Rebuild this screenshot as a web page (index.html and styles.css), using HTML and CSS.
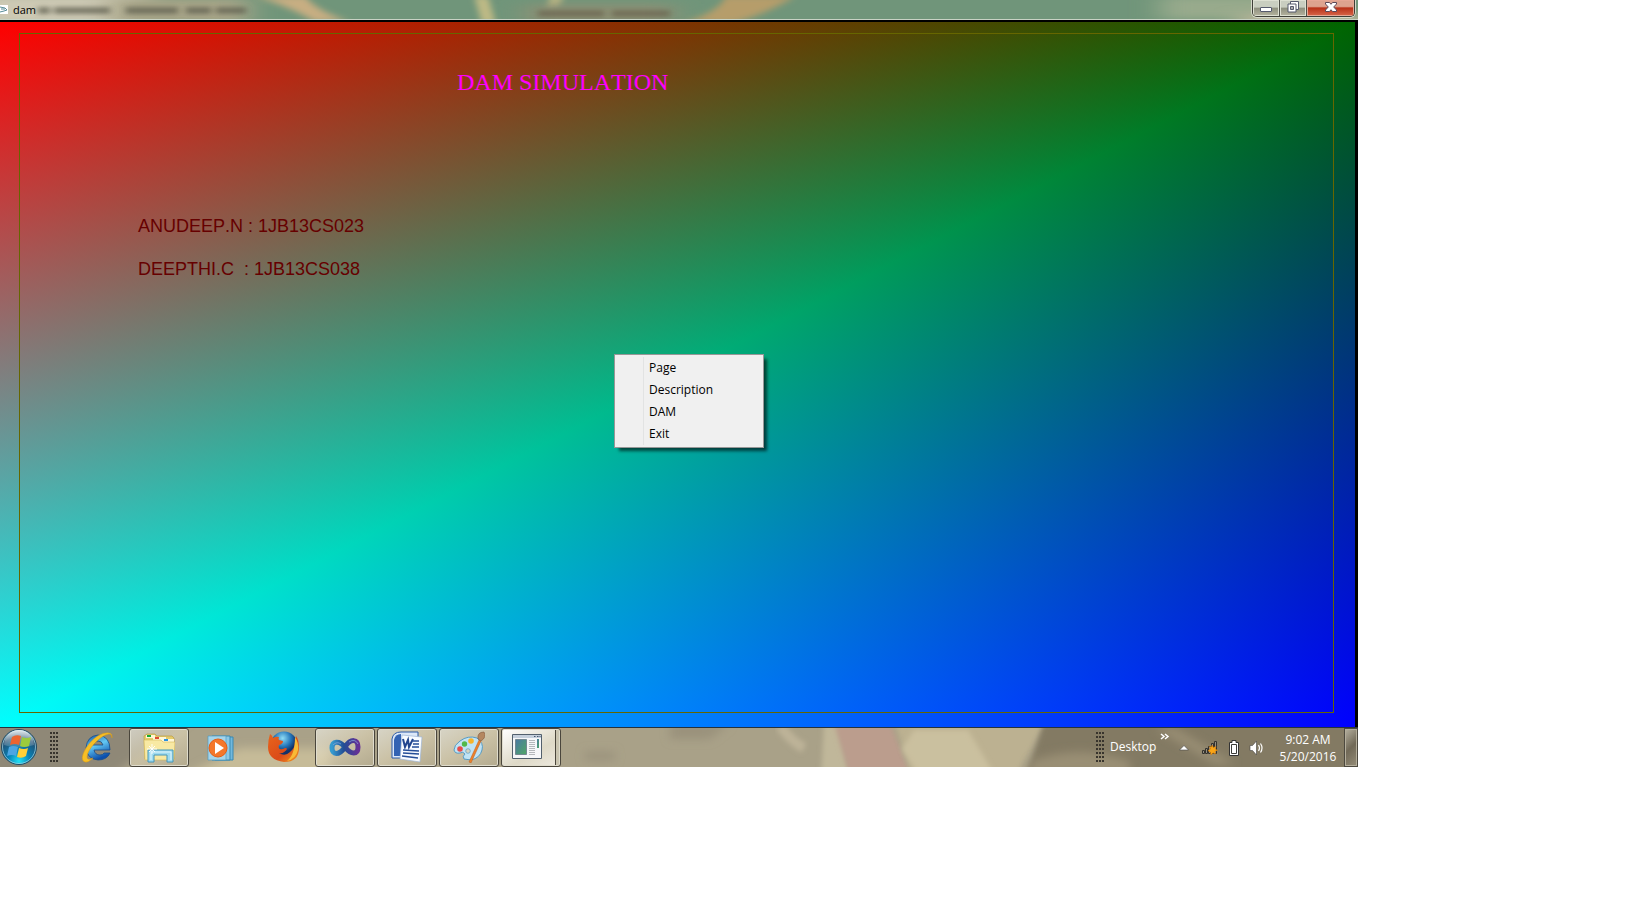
FILE: index.html
```html
<!DOCTYPE html>
<html lang="en">
<head>
<meta charset="utf-8">
<title>dam</title>
<link rel="stylesheet" href="styles.css">
</head>
<body>
<div class="desktop">
  <header class="titlebar">
    <svg class="backdrop" viewBox="0 0 1358 20" preserveAspectRatio="none" aria-hidden="true">
      <defs>
        <filter id="soft" x="-20%" y="-100%" width="140%" height="300%"><feGaussianBlur stdDeviation="3"/></filter>
        <filter id="softer" x="-20%" y="-100%" width="140%" height="300%"><feGaussianBlur stdDeviation="14 4"/></filter>
        <filter id="smear" x="-20%" y="-100%" width="140%" height="300%"><feGaussianBlur stdDeviation="3 2"/></filter>
      </defs>
      <rect width="1358" height="20" fill="#70957a"/>
      <rect x="-30" y="-6" width="180" height="32" fill="#cdc9b4" filter="url(#softer)"/>
      <rect x="110" y="-2" width="140" height="26" fill="#a8a588" filter="url(#softer)"/>
      <path d="M255-4h50q10 14 45 26h-35q-22-14-60-26z" fill="#c8ae82" filter="url(#soft)"/>
      <path d="M474-4h14l8 28h-14zM550-4h14l-6 14-12 2z" fill="#bdb985" filter="url(#soft)"/>
      <rect x="525" y="4" width="150" height="20" fill="#8b9075" filter="url(#softer)"/>
      <path d="M680 24q40-12 46-28h70q-30 18-64 28z" fill="#b69d6a" filter="url(#soft)"/>
      <rect x="1160" y="-4" width="170" height="24" fill="#98aa8c" filter="url(#softer)"/>
      <rect x="1240" y="14" width="130" height="12" fill="#bdb79b" filter="url(#softer)"/>
      <path d="M38 7h12v7H38zM54 7h56v7H54zM126 7h52v7h-52zM186 7h25v7h-25zM216 7h30v7h-30z" fill="#5f5e50" opacity=".7" filter="url(#smear)"/>
      <path d="M538 10h66v7h-66zM612 10h58v7h-58z" fill="#665d48" opacity=".6" filter="url(#smear)"/>
    </svg>
    <svg class="app-icon" viewBox="0 0 8 9" aria-hidden="true"><path fill="#fff" d="M0 0h8v9H0z"/><path d="M0 2l5 1 2 2-3 1-4 1M1 4h4" stroke="#5a8d98" fill="none"/></svg>
    <h1 class="window-title">dam</h1>
    <div class="window-buttons">
      <button class="win-btn minimize" aria-label="Minimize"><svg viewBox="0 0 14 12"><rect x="1.5" y="6.5" width="11" height="4" rx=".5" fill="#fff" stroke="#555a6d"/></svg></button>
      <button class="win-btn restore" aria-label="Restore"><svg viewBox="0 0 14 12"><path d="M4.500.500h8v8h-8z" fill="#fff" stroke="#555a6d"/><path d="M2 3h8v8H2z" fill="#fff" stroke="#555a6d"/><path d="M4.500 5.500h3v3h-3z" fill="#aaa" stroke="#555a6d"/></svg></button>
      <button class="win-btn close" aria-label="Close"><svg viewBox="0 0 14 12"><path d="M1.500 1.500h4L7 3.300l1.500-1.800h4v1.500L9.700 6l2.800 3v1.500h-4L7 8.700l-1.500 1.800h-4V9l2.800-3-2.800-3z" fill="#fff" stroke="#5b4858"/></svg></button>
    </div>
  </header>

  <main class="canvas">
    <svg class="shade" viewBox="0 0 1 1" preserveAspectRatio="none" aria-hidden="true">
      <defs>
        <linearGradient id="red" x1="0" y1="0" x2=".5" y2=".5"><stop stop-color="#f00"/><stop offset="1" stop-color="#000"/></linearGradient>
        <linearGradient id="greenUpper" x1="0" y1="0" x2=".34" y2=".867"><stop stop-color="#000"/><stop offset="1" stop-color="#0f0"/></linearGradient>
        <linearGradient id="greenLower" x1="1" y1="1" x2=".133" y2=".66"><stop stop-color="#000"/><stop offset="1" stop-color="#0f0"/></linearGradient>
        <linearGradient id="blue" x1="0" y1="0" x2="0" y2="1"><stop stop-color="#000"/><stop offset="1" stop-color="#00f"/></linearGradient>
      </defs>
      <rect width="1" height="1" fill="url(#greenUpper)"/>
      <rect class="darken" width="1" height="1" fill="url(#greenLower)"/>
      <rect class="screen" width="1" height="1" fill="url(#red)"/>
      <rect class="screen" width="1" height="1" fill="url(#blue)"/>
    </svg>
    <section class="frame">
      <h2 class="heading">DAM SIMULATION</h2>
      <div class="authors">
        <p>ANUDEEP.N : 1JB13CS023</p>
        <p>DEEPTHI.C&nbsp; : 1JB13CS038</p>
      </div>
    </section>
    <div class="menu" role="menu">
      <button role="menuitem">Page</button>
      <button role="menuitem">Description</button>
      <button role="menuitem">DAM</button>
      <button role="menuitem">Exit</button>
    </div>
  </main>

  <footer class="taskbar">
    <svg class="backdrop" viewBox="0 0 1358 39" preserveAspectRatio="none" aria-hidden="true">
      <defs><filter id="haze" x="-20%" y="-50%" width="140%" height="200%"><feGaussianBlur stdDeviation="5"/></filter>
      <filter id="edge" x="-20%" y="-50%" width="140%" height="200%"><feGaussianBlur stdDeviation="2.500"/></filter></defs>
      <rect width="1358" height="39" fill="#a9a188"/>
      <path d="M-10-10h200l-80 60H-10z" fill="#8f8877" filter="url(#haze)"/>
      <path d="M240 20h90v30h-150z" fill="#c6bb98" filter="url(#haze)"/>
      <path d="M670-5h60l-20 16h-40zM585 24h30v8h-30z" fill="#9a927b" filter="url(#haze)"/>
      <path d="M780-2q12 16 24 22" stroke="#bdb398" stroke-width="10" fill="none" filter="url(#edge)"/>
      <path d="M824-5h15l12 54h-30z" fill="#c0b79a" filter="url(#edge)"/>
      <path d="M834-5h56l22 54h-62z" fill="#bb9d8d" filter="url(#edge)"/>
      <path d="M895-5h150l-30 54H912z" fill="#bcb191" filter="url(#edge)"/>
      <path d="M914 2h54l28 47h-76l-18-28z" fill="#cac09f" filter="url(#edge)"/>
      <path d="M1045-8h330v58h-350z" fill="#837a64" filter="url(#edge)"/>
      <path d="M1030 34q50-20 100 0v12h-100zM1175 0l60 36h-20l-60-36z" fill="#9a8f75" filter="url(#haze)"/>
    </svg>
    <button class="start" aria-label="Start">
      <svg viewBox="0 0 38 38">
        <defs><radialGradient id="orb" cx=".5" cy=".9" r=".9"><stop stop-color="#20e1f5"/><stop offset=".35" stop-color="#0781b5"/><stop offset=".75" stop-color="#234e70"/><stop offset="1" stop-color="#9ab2bd"/></radialGradient>
        <linearGradient id="gloss" x2="0" y2="1"><stop stop-color="#fff" stop-opacity=".7"/><stop offset="1" stop-color="#fff" stop-opacity=".12"/></linearGradient></defs>
        <circle cx="19" cy="19" r="17.500" fill="url(#orb)" stroke="#214b64"/><circle cx="19" cy="19" r="16.500" fill="none" stroke="#a4d5e5" opacity=".7"/>
        <path d="M4 17a15 15 0 0 1 30 0q-15 5-30 0z" fill="url(#gloss)"/>
        <path d="M12 9q4-3 9-1l-2 9q-4-2-9 0z" fill="#ec6430"/><path d="M22 9q4 2 9 0l-2 9q-5 2-9 0z" fill="#9bcb3c"/><path d="M9 19q4-2 9 0l-2 9q-4-2-9 0z" fill="#4ca5e3"/><path d="M19 20q5 2 9 0l-2 8q-4 3-9 1z" fill="#ffcf36"/>
      </svg>
    </button>
    <span class="grip"></span>
    <nav class="apps" aria-label="Taskbar">
      <button class="app" aria-label="Internet Explorer"><svg viewBox="0 0 32 32">
        <defs><linearGradient id="ie" x2=".4" y2="1"><stop stop-color="#1452a0"/><stop offset=".5" stop-color="#63c8f4"/><stop offset="1" stop-color="#0c4fac"/></linearGradient></defs>
        <path d="M29 19H13q1 5 6 5 3 0 4-2h6q-3 7-12 7-11-1-12-12Q6 5 17 4q12 1 12 15zm-7-5q-1-4-5-4-4 0-5 4z" fill="url(#ie)" stroke="#174d8c" stroke-width=".8"/>
        <path d="M31 7q1-7-9-4.500Q12 6 5 17-2 29 4 31q3 1 8-4-6 3-6-1 0-5 7-13Q21 4 28 3q3 0 3 4z" fill="#f7bf26" stroke="#d89810" stroke-width=".5"/></svg></button>
      <button class="app open" aria-label="Windows Explorer"><svg viewBox="0 0 32 32">
        <path d="M1 5l3-2h8l2 2h15l2 2v21H2z" fill="#e5cb6b" stroke="#b99b46" stroke-width=".7"/><path d="M3 4h9v3H3z" fill="#fff7d6"/><path d="M4 4h4v2H4z" fill="#18aa34"/><path d="M10 6h13v4H10z" fill="#fff7d6"/><path d="M12 6h4v2h-4z" fill="#dd4b32"/><path d="M19 8h12v4H19z" fill="#fff7d6"/><path d="M21 8h4v2h-4z" fill="#2b92df"/>
        <path d="M1 9h17l2 2h12l-1 18H2z" fill="#f8e9a3" stroke="#d5b858" stroke-width=".6"/>
        <path d="M5 19h25v12h-6v-7H11v7H5z" fill="#9fdaef" stroke="#4596b9"/><path d="M7 21h21v8M8 22v7" stroke="#e1f6fc" fill="none"/><path d="M9 13v10M4 18h10M6 15l6 6M6 21l6-6" stroke="#fff" stroke-width=".9"/></svg></button>
      <button class="app" aria-label="Windows Media Player"><svg viewBox="0 0 32 32">
        <path d="M10 6h18v23H10z" fill="#72b8dc" stroke="#3989b2"/><path d="M7 5h18v24H7z" fill="#8ec8e5" stroke="#3989b2"/><path d="M3 5h18v24H3z" fill="#a6d4e9" stroke="#4d9cc4" stroke-width=".7"/>
        <circle cx="13" cy="17" r="9" fill="#f4772b" stroke="#e65d12"/><path d="M10 11v12l9-6z" fill="#fff"/></svg></button>
      <button class="app" aria-label="Firefox"><svg viewBox="0 0 32 32">
        <defs><radialGradient id="globe" cx=".45" cy=".25"><stop stop-color="#8fdcf4"/><stop offset=".6" stop-color="#2679bd"/><stop offset="1" stop-color="#133269"/></radialGradient>
        <linearGradient id="fox" x1="0" x2="1" y2="1"><stop stop-color="#e8651c"/><stop offset=".6" stop-color="#db4b18"/><stop offset="1" stop-color="#f4a123"/></linearGradient></defs>
        <circle cx="17" cy="14" r="13.500" fill="url(#globe)"/>
        <path d="M3 3q2 1 3 4 3-2 6-1-1 2 0 3l4 1q0 3-4 4-1 3 1 4 2 1 5-1 2 0 2 1-3 5-8 4 6 4 11-1 5-4 5-10l1-6q3 4 3 12 0 14-15 14Q1 29 1 16 1 9 3 3z" fill="url(#fox)"/><path d="M28 6q4 6 3 13-2 9-11 11 8-6 8-24z" fill="#f8ba35"/></svg></button>
      <button class="app open" aria-label="Visual Studio"><svg viewBox="0 0 32 32">
        <defs><linearGradient id="vs"><stop stop-color="#369bd0"/><stop offset=".45" stop-color="#234d94"/><stop offset="1" stop-color="#653196"/></linearGradient></defs>
        <path d="M16 16C10 9 3 10 3 17s7 8 13-1 13-8 13 0-7 8-13 0z" fill="none" stroke="url(#vs)" stroke-width="5"/><path d="M4 14q4-4 8-1M20 11q6-4 9 2" fill="none" stroke="#86a6de" stroke-width="1" opacity=".7"/></svg></button>
      <button class="app open" aria-label="Microsoft Word"><svg viewBox="0 0 32 32">
        <path d="M1 27V8q1-7 9-7h17v26z" fill="#dce8f8" stroke="#2d5ba8"/><path d="M3 25V9q1-6 7-6v22z" fill="#3363b3"/><path d="M11 4l20 2-2 25-20-3z" fill="#f8fbff" stroke="#9eb4d4" stroke-width=".7"/>
        <path d="M12 8l2 8 3-7 1 7 4-8" fill="none" stroke="#21458e" stroke-width="2"/><path d="M22 10h6M22 13h6M21 16h7M12 19l16 1M12 22l16 1M11 25l16 2" stroke="#254f99" stroke-width="1.500"/></svg></button>
      <button class="app open" aria-label="Paint"><svg viewBox="0 0 32 32">
        <path d="M7 10Q15 4 24 7q7 5 5 12-2 8-11 10l-7-1q-2-3 1-5-2-3-5-1-5 1-6-3 0-5 6-9z" fill="#c0e3f5" stroke="#579bc3"/>
        <circle cx="7" cy="18" r="2.800" fill="#e84b49"/><circle cx="11.500" cy="13" r="2.700" fill="#51b84b"/><circle cx="18" cy="10" r="2.800" fill="#f6b42c"/><circle cx="15" cy="20" r="2.300" fill="#d6d4c2" stroke="#579bc3" stroke-width=".7"/>
        <path d="M26 9l2 1-10 22-2-1z" fill="#ed812b" stroke="#b95f23" stroke-width=".5"/><path d="M25 8q-1-7 6-7 3 5-3 9z" fill="#b48760" stroke="#855b3f" stroke-width=".6"/></svg></button>
      <button class="app open current" aria-label="dam"><svg viewBox="0 0 32 32">
        <defs><linearGradient id="pane" x2="1" y2="1"><stop stop-color="#4a79a4"/><stop offset="1" stop-color="#50a764"/></linearGradient></defs>
        <path d="M1.500 3.500h29v24h-29z" fill="#f6f7f9" stroke="#53606d"/><path d="M2 4h28v3H2z" fill="#c6d0dc"/><path d="M23 5.500h1.500M26 5.500h1.500M28.500 5.500h1" stroke="#43556e"/><path d="M4.500 8.500h11v15h-11z" fill="url(#pane)" stroke="#738890"/><path d="M18 9.500h6M18 11.500h6M18 13.500h6M18 15.500h6M18 17.500h6M18 19.500h6M18 21.500h6M18 23.500h6" stroke="#b5b8bc"/><path d="M26 8h2v9h-2z" fill="url(#pane)"/></svg></button>
    </nav>
    <div class="tray">
      <span class="grip"></span>
      <button class="desk-label">Desktop</button>
      <button class="tray-btn chevrons" aria-label="Show toolbar items"><svg width="10" height="8" viewBox="0 0 10 8"><path d="M1 1l3 2.500L1 6M5 1l3 2.500L5 6" fill="none" stroke="#fff" stroke-width="1.500"/></svg></button>
      <button class="tray-btn arrow" aria-label="Show hidden icons"><svg width="10" height="6" viewBox="0 0 10 6"><path d="M5 .5l4.500 4.500h-9z" fill="#fff" stroke="#444" stroke-width=".6"/></svg></button>
      <button class="tray-btn network" aria-label="Network"><svg width="18" height="16" viewBox="0 0 18 16"><path d="M1.500 10.500h2v3h-2zM4.500 8.500h2v5h-2zM7.500 6.500h2v7h-2zM10.500 3.500h2v10h-2zM13.500 1.500h2v12h-2z" fill="#938d80" stroke="#34332e"/><path d="M11 5l1.200 2.400L15 6.500 14.200 9l2.300 1.300-2.500 1 .5 2.700-2.500-1.200L10 15l-.5-2.700-2.500-1.600L9.400 9 8.500 6.500l2 .5z" fill="#f9a516" stroke="#d97d07" stroke-width=".5"/></svg></button>
      <button class="tray-btn battery" aria-label="Battery"><svg width="12" height="16" viewBox="0 0 12 16"><path d="M4 .5h4v2h2.500v13h-9v-13H4z" fill="#fff" stroke="#333"/><path d="M3.500 4.500h5v9h-5z" fill="#fff" stroke="#3c3c38"/></svg></button>
      <button class="tray-btn sound" aria-label="Volume"><svg width="16" height="16" viewBox="0 0 16 16"><path d="M1 5.500h2.500L7.500 1v14l-4-4.500H1z" fill="#fff" stroke="#444" stroke-width=".6"/><path d="M9.500 5q2 3 0 6M11.500 3.500q3 4.500 0 9" fill="none" stroke="#fff" stroke-width="1.200"/></svg></button>
      <button class="clock"><span>9:02 AM</span><span>5/20/2016</span></button>
      <button class="show-desktop" aria-label="Show desktop"></button>
    </div>
  </footer>
</div>
</body>
</html>
```
FILE: styles.css
```css
* { box-sizing: border-box; }

body {
  margin: 0;
  background: #fff;
  font-family: "Open Sans", "Noto Sans", sans-serif;
  font-size: 12px;
}

button {
  margin: 0;
  padding: 0;
  border: 0;
  background: none;
  color: inherit;
  font: inherit;
}

svg { display: block; }

.desktop {
  display: flex;
  flex-direction: column;
  width: calc(100% - 280px);
  height: calc(100vh - 153px);
  min-height: 500px;
}

.backdrop {
  position: absolute;
  inset: 0;
  z-index: -1;
  width: 100%;
  height: 100%;
}

.titlebar {
  position: relative;
  z-index: 0;
  display: flex;
  flex: none;
  height: 22px;
  overflow: hidden;
  border-bottom: 2px solid #000;
}

.titlebar::after {
  content: "";
  position: absolute;
  inset: auto 0 0;
  height: 1px;
  background: #c8d2c4;
}

.app-icon {
  width: 8px;
  height: 9px;
  margin-top: 5px;
}

.window-title {
  margin: 0 0 0 5px;
  color: #000;
  font-size: 11px;
  font-weight: 400;
  line-height: 20px;
}

.window-buttons {
  display: flex;
  height: 17px;
  margin: 0 3px 0 auto;
  overflow: hidden;
  border: 1px solid #3e3f38;
  border-top: 0;
  border-radius: 0 0 5px 5px;
  box-shadow: 0 0 0 1px #d5d8c9;
}

.win-btn {
  display: flex;
  justify-content: center;
  width: 27px;
  padding-top: 1px;
  border-right: 1px solid #4d4e47;
  background: linear-gradient(#c9cec0 0 45%, #8d8f7e 50%, #b5b39f);
  box-shadow: inset 0 0 0 1px #dde0d2;
}

.win-btn svg { width: 14px; height: 12px; }

.close {
  width: 47px;
  border-right: 0;
  background: linear-gradient(#dda38f 0 40%, #b83219 50%, #d8674a);
  box-shadow: inset 0 0 0 1px #e5a795;
}

.canvas {
  position: relative;
  z-index: 0;
  display: flex;
  flex: 1;
  min-height: 0;
  padding: 11px 21px 14px 19px;
  border-right: 3px solid #000;
  background: #000;
}

.shade {
  position: absolute;
  inset: 0;
  z-index: -1;
  width: 100%;
  height: 100%;
  isolation: isolate;
}

.darken { mix-blend-mode: darken; }
.screen { mix-blend-mode: screen; }

.frame {
  flex: 1;
  border: 1px solid #666600;
}

.heading {
  margin: 34px 0 0 437px;
  color: #f0f;
  font: 400 24px/28px "Liberation Serif", serif;
  font-kerning: none;
}

.authors {
  display: flex;
  flex-direction: column;
  gap: 19px;
  margin: 118px 0 0 118px;
  color: #600;
  font: 18px/24px "Liberation Sans", sans-serif;
  font-kerning: none;
}

.authors p { margin: 0; }

.menu {
  position: absolute;
  top: 332px;
  left: 614px;
  display: flex;
  flex-direction: column;
  width: 150px;
  padding: 2px;
  border: 1px solid #979797;
  background: linear-gradient(#e2e3e3, #e2e3e3) 28px 2px / 1px calc(100% - 4px) no-repeat, #f0f0f0;
  box-shadow: 4px 4px 3px -1px rgb(0 0 0 / 60%);
  color: #000;
}

.menu button {
  height: 22px;
  padding-left: 32px;
  line-height: 22px;
  text-align: left;
}

.taskbar {
  position: relative;
  z-index: 0;
  display: flex;
  flex: none;
  height: 40px;
  overflow: hidden;
  border-top: 1px solid #26323c;
  box-shadow: inset 0 1px #b9c0b8;
}

.start {
  width: 38px;
  height: 38px;
}

.grip {
  width: 9px;
  height: 32px;
  margin: 4px 8px 0 12px;
  background:
    linear-gradient(#38342d, #38342d) 0 0 / 2px 100% no-repeat,
    linear-gradient(#38342d, #38342d) 3px 0 / 2px 100% no-repeat,
    linear-gradient(#38342d, #38342d) 6px 0 / 2px 100% no-repeat;
  mask: linear-gradient(#000 0 2px, transparent 2px) 0 0 / 100% 4px;
}

.apps {
  display: flex;
  gap: 2px;
}

.app {
  display: flex;
  justify-content: center;
  width: 60px;
  height: 39px;
  padding-top: 2px;
  border: 1px solid transparent;
}

.app svg { width: 32px; height: 32px; }

.open {
  border-color: #4a463c;
  border-radius: 3px;
  background: linear-gradient(150deg, rgb(240 240 232 / 65%), rgb(225 215 185 / 60%) 50%, rgb(190 180 150 / 50%));
  box-shadow: inset 0 0 0 1px #dfdccd;
}

.current {
  width: 60px;
  padding-right: 8px;
  background: linear-gradient(90deg, transparent 53px, #4a463c 53px 54px, #c9c4b0 54px), linear-gradient(150deg, #fff, #ded9c7 60%, #eeeae0);
}

.tray {
  display: flex;
  align-items: center;
  margin-left: auto;
  color: #fff;
}

.tray .grip {
  align-self: flex-start;
  margin: 4px 5px 0 0;
}

.desk-label {
  width: 44px;
  padding-bottom: 2px;
  text-align: left;
}

.chevrons { align-self: flex-start; margin: 5px 0 0 6px; }
.arrow { margin-left: 9px; }
.network { margin-left: 12px; }
.battery { margin-left: 9px; }
.sound { margin-left: 9px; }

.clock {
  display: flex;
  flex-direction: column;
  align-items: center;
  width: 72px;
  margin-left: 7px;
  line-height: 17px;
}

.show-desktop {
  align-self: stretch;
  width: 14px;
  border: 1px solid #4d493f;
  background: linear-gradient(135deg, #b6b1a0, #716957 50%, #958d78);
  box-shadow: inset 0 0 0 1px #b3ad9b;
}
```
